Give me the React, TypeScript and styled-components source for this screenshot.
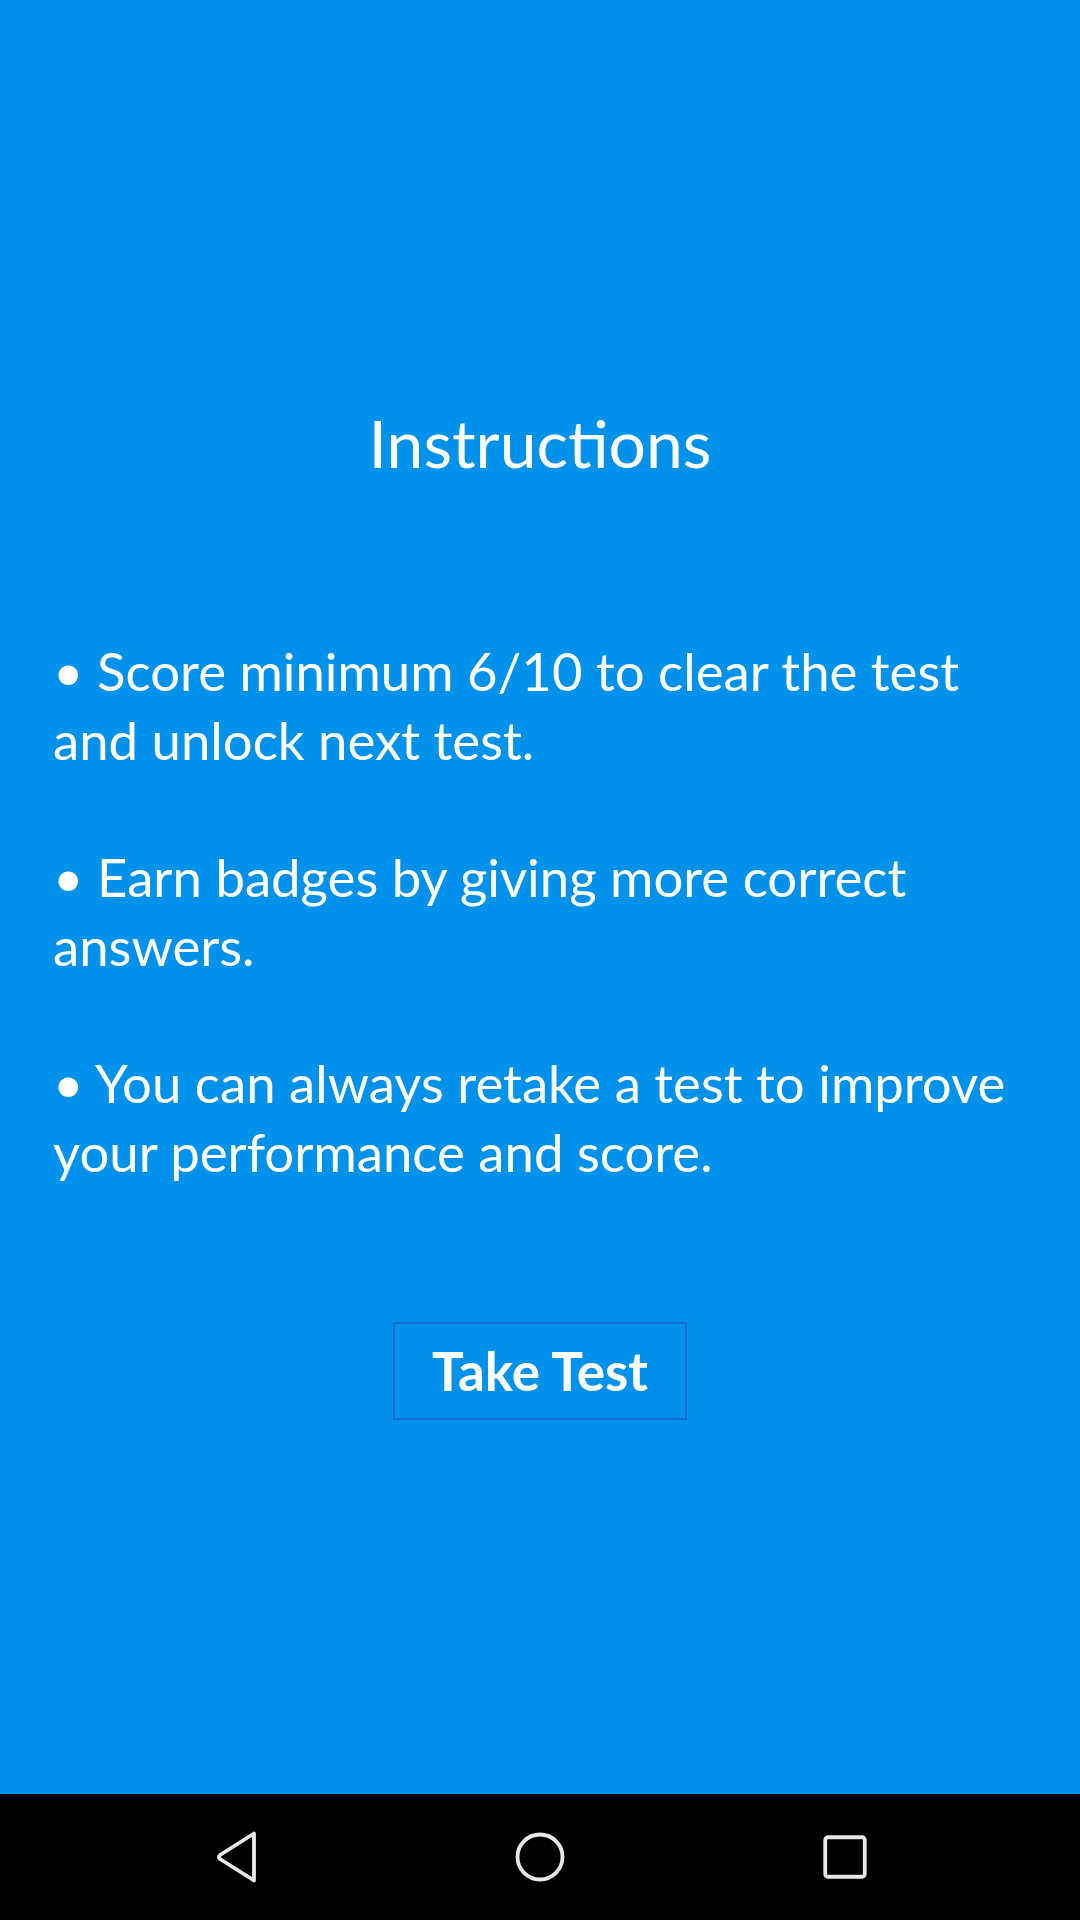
import React from "react";
import styled, { createGlobalStyle } from "styled-components";

const Global = createGlobalStyle`
  html, body { margin: 0; padding: 0; }
  body { font-family: Lato, "Noto Sans", sans-serif; background: #0091EA; }
`;

const Screen = styled.div`
  width: 1080px;
  height: 1920px;
  display: flex;
  flex-direction: column;
  background: #0091EA;
  color: #ffffff;
`;

const Content = styled.main`
  flex: 1;
  display: flex;
  flex-direction: column;
  align-items: stretch;
  padding: 404px 53px 0 53px;
`;

const Title = styled.h1`
  margin: 0;
  font-family: Lato, sans-serif;
  font-weight: 400;
  font-size: 66px;
  line-height: 77px;
  text-align: center;
`;

const List = styled.div`
  margin-top: 156px;
  display: flex;
  flex-direction: column;
  gap: 68.7px;
`;

const Item = styled.p`
  margin: 0;
  font-family: Lato, sans-serif;
  font-size: 52.7px;
  line-height: 68.7px;
  font-weight: 400;
`;

const ButtonRow = styled.div`
  margin-top: 135px;
  display: flex;
  justify-content: center;
`;

const TakeButton = styled.button`
  width: 294px;
  height: 98px;
  box-sizing: border-box;
  border: 2px solid #1a6ccf;
  background: transparent;
  color: #ffffff;
  font-family: Lato, sans-serif;
  font-weight: 700;
  font-size: 53px;
  padding: 0;
  display: flex;
  align-items: center;
  justify-content: center;
`;

const NavBar = styled.nav`
  height: 126px;
  background: #000000;
  position: relative;
`;

const NavSlot = styled.div<{ $x: number }>`
  position: absolute;
  left: ${(p) => p.$x}px;
  top: 0;
  height: 126px;
  width: 60px;
  margin-left: -30px;
  display: flex;
  align-items: center;
  justify-content: center;
`;

const items = [
  "• Score minimum 6/10 to clear the test and unlock next test.",
  "• Earn badges by giving more correct answers.",
  "• You can always retake a test to improve your performance and score.",
];

export default function App() {
  return (
    <>
      <Global />
      <Screen>
        <Content>
          <Title>Instructions</Title>
          <List>
            {items.map((t) => (
              <Item key={t}>{t}</Item>
            ))}
          </List>
          <ButtonRow>
            <TakeButton>Take Test</TakeButton>
          </ButtonRow>
        </Content>
        <NavBar>
          <NavSlot $x={237}>
            <svg width="48" height="56" viewBox="0 0 48 56">
              <path
                d="M41 4.5 L41 51.5 L7 30 Q5 28 7 26 Z"
                fill="none"
                stroke="#e8e8e8"
                strokeWidth="3.8"
                strokeLinejoin="round"
              />
            </svg>
          </NavSlot>
          <NavSlot $x={540}>
            <svg width="56" height="56" viewBox="0 0 56 56">
              <circle cx="28" cy="28" r="22.5" fill="none" stroke="#e8e8e8" strokeWidth="3.8" />
            </svg>
          </NavSlot>
          <NavSlot $x={845}>
            <svg width="56" height="56" viewBox="0 0 56 56">
              <rect x="8.25" y="8.25" width="39.5" height="39.5" rx="2.5" fill="none" stroke="#e8e8e8" strokeWidth="3.8" />
            </svg>
          </NavSlot>
        </NavBar>
      </Screen>
    </>
  );
}
